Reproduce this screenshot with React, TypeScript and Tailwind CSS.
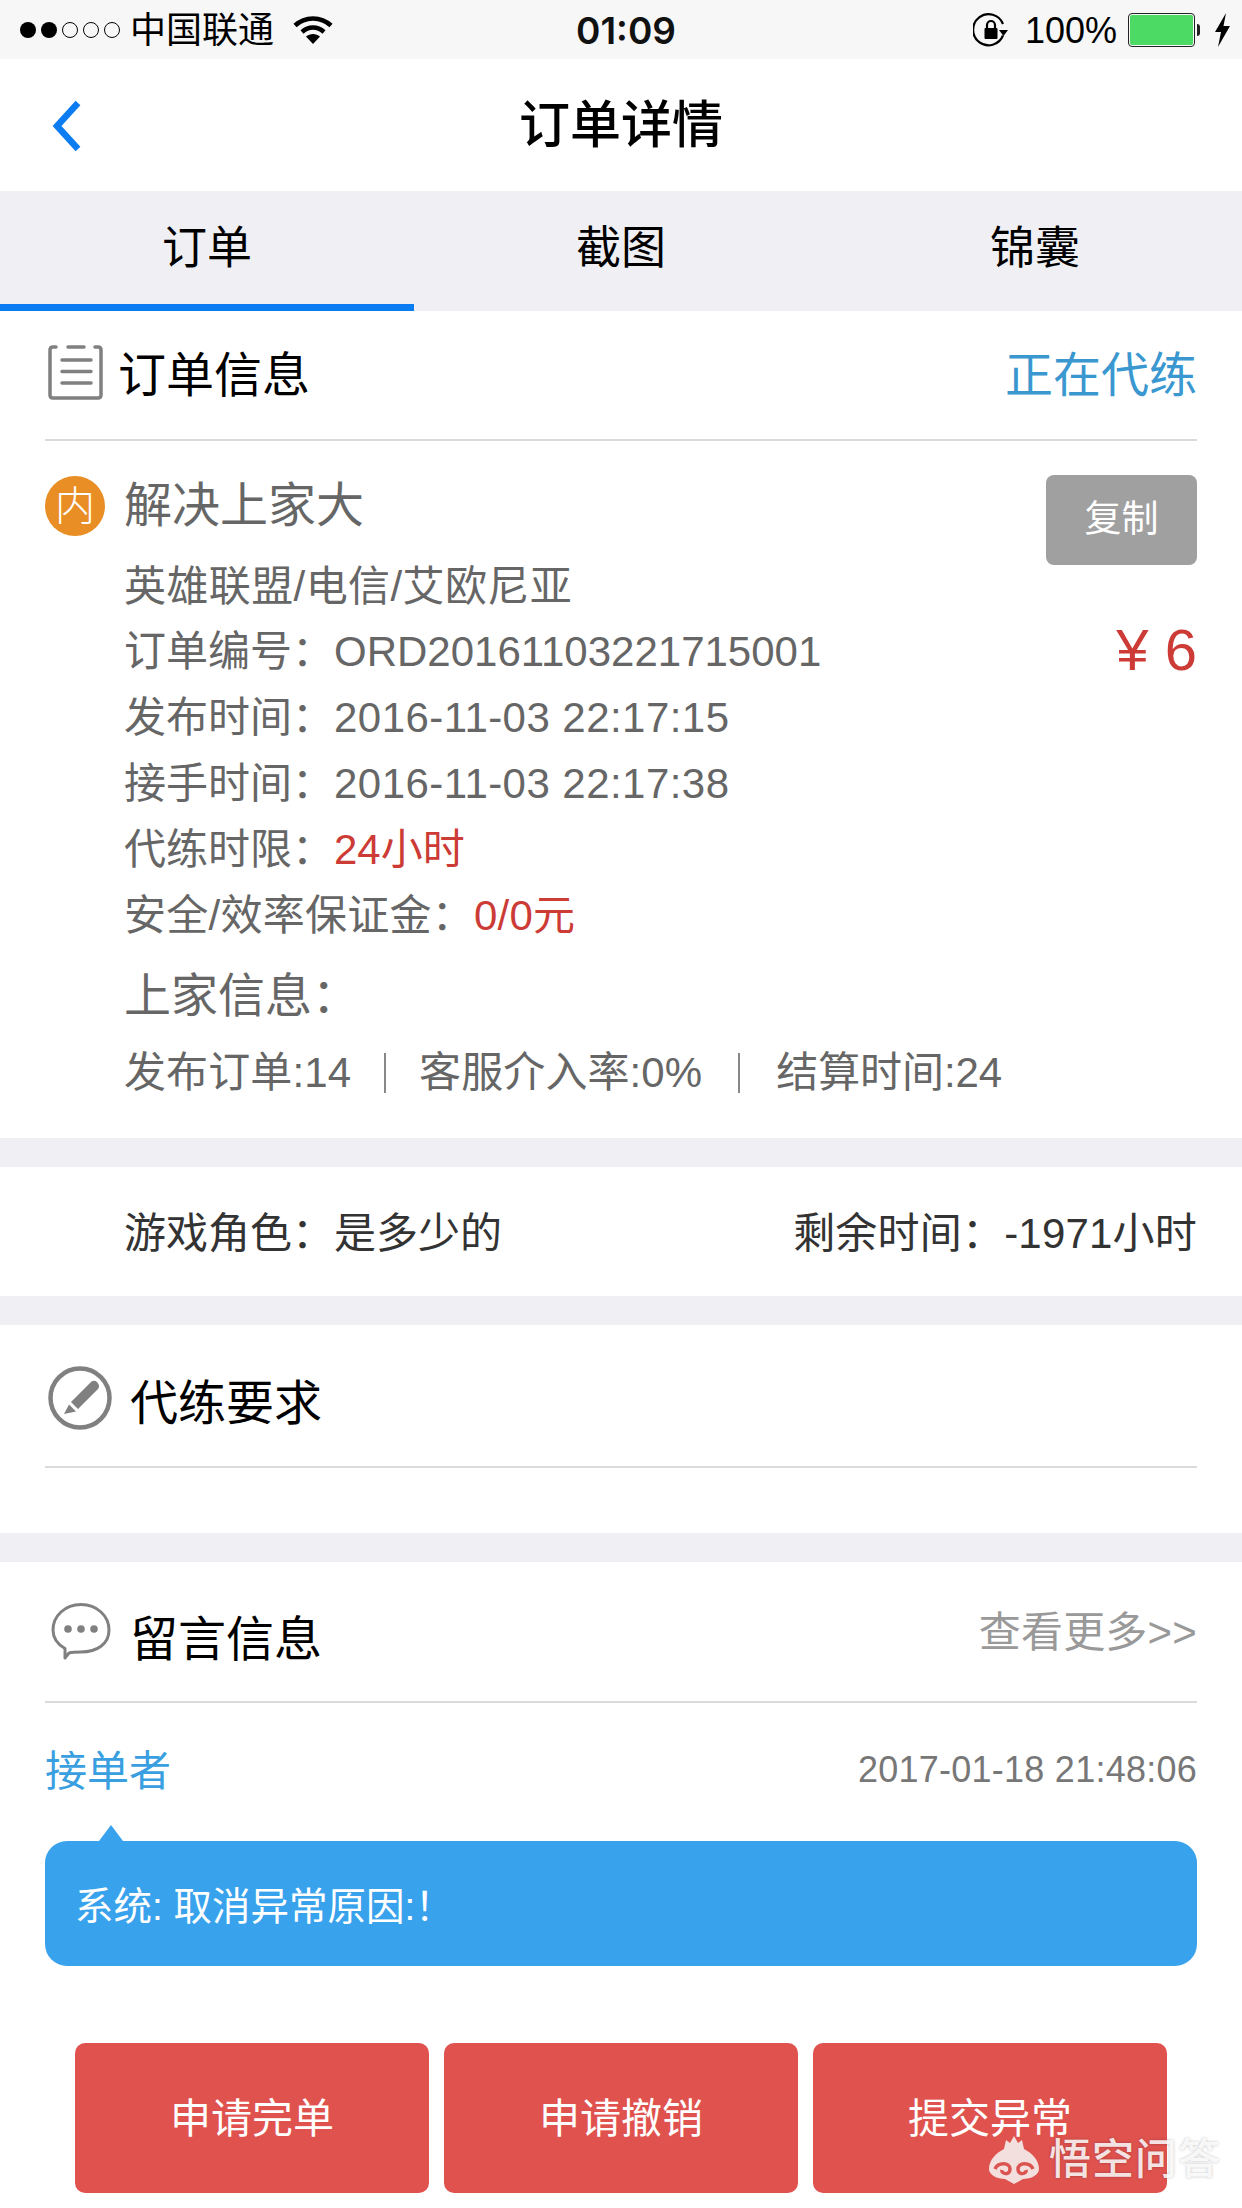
import React from 'react';

const Gap = () => <div className="h-[29px] shrink-0 bg-[#efeff4]" />;
const Line = () => <div className="h-[2px] mx-[45px] bg-[#dadada]" />;

function Wifi() {
    return (
        <svg width="40" height="30" viewBox="0 0 40 30" fill="none" stroke="#000">
            <path d="M2 10.500C12 1 28 1 38 10.500" strokeWidth="4.500" />
            <path d="M9 17c6.500-6 15.500-6 22 0" strokeWidth="4.500" />
            <path d="M13 21.500c4-3.500 10-3.500 14 0L20 29z" fill="#000" stroke="none" />
        </svg>
    );
}

function RotationLock() {
    return (
        <svg width="36" height="36" viewBox="0 0 36 36" fill="none">
            <path d="M30 23.500A15.500 15.500 0 1 1 30 12" stroke="#000" strokeWidth="2.200" />
            <path d="M26 18h9l-4.500 6z" fill="#000" />
            <rect x="11.500" y="16" width="13" height="11" rx="1" fill="#000" />
            <path d="M14 16v-3a4 4 0 0 1 8 0v3" stroke="#000" strokeWidth="2.200" />
        </svg>
    );
}

function Battery() {
    return (
        <div className="flex items-center">
            <div className="w-[67px] h-[34px] border border-[#222] rounded-[4px] p-px">
                <div className="w-full h-full bg-[#4cd964] rounded-[2px]" />
            </div>
            <div className="ml-[2px] w-[3px] h-[12px] bg-[#222] rounded-r-full" />
        </div>
    );
}

function Bolt() {
    return (
        <svg width="17" height="34" viewBox="0 0 17 34" fill="#000">
            <path d="M12 0L1 19h6L4 34 16 13H9.500z" />
        </svg>
    );
}

function ClipboardIcon() {
    return (
        <svg width="56" height="56" viewBox="0 0 56 56" fill="none" stroke="#808080" strokeWidth="3.500" strokeLinecap="round">
            <path d="M8 2H5Q2 2 2 5V50Q2 53 5 53H50Q53 53 53 50V5Q53 2 50 2H47" />
            <path d="M20 2H36" />
            <path d="M14 15H43M14 26.500H43M14 38H43" />
        </svg>
    );
}

function PencilIcon() {
    return (
        <svg width="64" height="64" viewBox="0 0 64 64">
            <circle cx="32" cy="32" r="29.500" fill="none" stroke="#808080" strokeWidth="4.500" />
            <path d="M23 36L43 16Q46 13.500 49 16L50 17.500Q52 20 50 23L30 43z" fill="#808080" />
            <path d="M21 38.500L28 45.500L16 48z" fill="#808080" />
        </svg>
    );
}

function ChatIcon() {
    return (
        <svg width="60" height="60" viewBox="0 0 60 60" fill="none">
            <path d="M14 46.500C6 42 2 35.500 2 28C2 14 14 2.500 30 2.500S58 14 58 28S46 50 30 50C26 50 22 50 18 51L14 56z" stroke="#808080" strokeWidth="3" strokeLinejoin="round" />
            <circle cx="17" cy="27" r="3.800" fill="#808080" />
            <circle cx="30" cy="27" r="3.800" fill="#808080" />
            <circle cx="43" cy="27" r="3.800" fill="#808080" />
        </svg>
    );
}

function Watermark() {
    return (
        <div className="absolute left-[989px] top-[2136px] flex items-center text-white/85 [text-shadow:0_0_3px_rgba(0,0,0,0.25)]">
            <svg width="50" height="48" viewBox="0 0 50 48">
                <path d="M25 0L29 7L33 4L35 13C43 17 50 24 50 33C50 39 42 43 34 43L25 48L16 43C8 43 0 39 0 33C0 24 7 17 15 13L17 4L21 7z" fill="#f3dfdd" />
                <path d="M6 33c3-7 15-7 15 0s-9 5-8 1M44 33c-3-7-15-7-15 0s9 5 8 1" fill="none" stroke="#dc5450" strokeWidth="3.500" />
            </svg>
            <span className="ml-[10px] text-[42px] leading-none font-medium tracking-[1px]">悟空问答</span>
        </div>
    );
}

export default function App() {
    return (
        <div className="relative w-[1242px] h-[2208px] overflow-hidden bg-white text-black font-['Liberation_Sans','Noto_Sans_CJK_SC',sans-serif]">
            {/* status bar */}
            <div className="h-[59px] bg-[#f7f7f7] flex items-center px-[20px] text-[36px]">
                <div className="flex-1 flex items-center">
                    <div className="flex items-center gap-[5px]">
                        <span className="w-[16px] h-[16px] rounded-full bg-black" />
                        <span className="w-[16px] h-[16px] rounded-full bg-black" />
                        <span className="w-[16px] h-[16px] rounded-full border border-black" />
                        <span className="w-[16px] h-[16px] rounded-full border border-black" />
                        <span className="w-[16px] h-[16px] rounded-full border border-black" />
                    </div>
                    <span className="ml-[10px] mt-[2px]">中国联通</span>
                    <span className="ml-[19px] flex"><Wifi /></span>
                </div>
                <div className="ml-[10px] mt-[2px] text-[37px] font-['Inter'] font-semibold text-[#111]">01:09</div>
                <div className="flex-1 flex items-center justify-end gap-[5px]">
                    <RotationLock />
                    <span className="ml-[11px] mr-[6px] mt-[2px]">100%</span>
                    <Battery />
                    <span className="ml-[9px] mr-[-9px] flex"><Bolt /></span>
                </div>
            </div>

            {/* nav */}
            <div className="relative h-[132px] flex items-center justify-center">
                <svg className="absolute left-[52px] top-[41px]" width="30" height="52" viewBox="0 0 30 52" fill="none">
                    <path d="M26 3L5 26L26 49" stroke="#0c7cf2" strokeWidth="6.500" />
                </svg>
                <h1 className="text-[51px] font-medium mt-[2px]">订单详情</h1>
            </div>

            {/* tabs */}
            <div className="h-[120px] bg-[#efeff4] flex text-[45px]">
                <div className="w-[414px] flex items-center justify-center border-b-[7px] border-[#0c7cf2] pt-[2px]">订单</div>
                <div className="w-[414px] flex items-center justify-center pb-[5px]">截图</div>
                <div className="w-[414px] flex items-center justify-center pb-[5px]">锦囊</div>
            </div>

            {/* order info */}
            <div className="h-[128px] pl-[48px] pr-[45px] flex items-center justify-between">
                <div className="flex items-center">
                    <span className="flex mt-[-4px]"><ClipboardIcon /></span>
                    <span className="ml-[14px] text-[48px] mt-[2px]">订单信息</span>
                </div>
                <span className="text-[48px] text-[#3a97d0] mt-[2px]">正在代练</span>
            </div>
            <Line />
            <div className="px-[45px] pt-[32px] pb-[32px] flex justify-between">
                <div className="flex-1 text-[42px] text-[#666]">
                    <div className="flex items-center h-[66px]">
                        <span className="w-[60px] h-[60px] rounded-full bg-[#e88e24] text-white text-[40px] font-light flex items-center justify-center">内</span>
                        <span className="ml-[19px] text-[48px]">解决上家大</span>
                    </div>
                    <div className="pl-[79px]">
                        <div className="mt-[15px] h-[65px] leading-[66px] tracking-[0.4px]">英雄联盟/电信/艾欧尼亚</div>
                        <div className="h-[66px] leading-[66px]">订单编号：ORD20161103221715001</div>
                        <div className="h-[66px] leading-[66px]">发布时间：<span className="tracking-[0.45px]">2016-11-03 22:17:15</span></div>
                        <div className="h-[66px] leading-[66px]">接手时间：<span className="tracking-[0.45px]">2016-11-03 22:17:38</span></div>
                        <div className="h-[66px] leading-[66px]">代练时限：<span className="text-[#cc3b36]">24小时</span></div>
                        <div className="h-[66px] leading-[66px] tracking-[0.25px]">安全/效率保证金：<span className="text-[#cc3b36]">0/0元</span></div>
                        <div className="mt-[14px] h-[66px] leading-[66px] text-[47px]">上家信息：</div>
                        <div className="mt-[11px] h-[66px] leading-[66px] flex items-center tracking-[0.1px]">
                            <span>发布订单:14</span>
                            <span className="mx-[33px] w-[2px] h-[40px] bg-[#888]" />
                            <span>客服介入率:0%</span>
                            <span className="mx-[36px] w-[2px] h-[40px] bg-[#888]" />
                            <span className="tracking-[-0.1px]">结算时间:24</span>
                        </div>
                    </div>
                </div>
                <div className="flex flex-col items-end">
                    <div className="mt-[2px] w-[151px] h-[90px] bg-[#a0a0a0] rounded-[8px] text-white text-[37px] flex items-center justify-center">复制</div>
                    <div className="mt-[52px] h-[66px] leading-[66px] text-[58px] text-[#cc3b36]">¥ 6</div>
                </div>
            </div>
            <Gap />

            {/* role */}
            <div className="h-[129px] pl-[124px] pr-[45px] pt-[4px] flex items-center justify-between text-[42px] text-[#333]">
                <span>游戏角色：是多少的</span>
                <span className="tracking-[0.2px]">剩余时间：-1971小时</span>
            </div>
            <Gap />

            {/* requirements */}
            <div className="h-[141px] pl-[48px] pr-[45px] pt-[5px] flex items-center">
                <PencilIcon />
                <span className="ml-[18px] text-[48px] mt-[11px]">代练要求</span>
            </div>
            <Line />
            <div className="h-[65px]" />
            <Gap />

            {/* messages */}
            <div className="h-[139px] pl-[51px] pr-[45px] flex items-center justify-between">
                <div className="flex items-center">
                    <ChatIcon />
                    <span className="ml-[19px] text-[48px] mt-[16px]">留言信息</span>
                </div>
                <span className="text-[42px] tracking-[0.2px] text-[#999] mt-[1px]">查看更多&gt;&gt;</span>
            </div>
            <Line />
            <div className="px-[45px]">
                <div className="h-[138px] flex items-center justify-between">
                    <span className="text-[42px] text-[#3a9fe0] mb-[2px]">接单者</span>
                    <span className="text-[36px] tracking-[0.25px] text-[#777] mb-[4px]">2017-01-18 21:48:06</span>
                </div>
                <div className="relative h-[125px] rounded-[22px] bg-[#39a2ec] px-[30px] pt-[6px] flex items-center text-[38.5px] text-white">
                    <span className="absolute left-[54px] -top-[16px] w-0 h-0 border-x-[12px] border-x-transparent border-b-[16px] border-b-[#39a2ec]" />
                    系统: 取消异常原因:！
                </div>
            </div>

            {/* actions */}
            <div className="mt-[77px] px-[75px] flex gap-[15px] text-[41px] text-white">
                <div className="flex-1 h-[150px] pt-[3px] rounded-[10px] bg-[#df524e] flex items-center justify-center">申请完单</div>
                <div className="flex-1 h-[150px] pt-[3px] rounded-[10px] bg-[#df524e] flex items-center justify-center">申请撤销</div>
                <div className="flex-1 h-[150px] pt-[3px] rounded-[10px] bg-[#df524e] flex items-center justify-center">提交异常</div>
            </div>

            <Watermark />
        </div>
    );
}
